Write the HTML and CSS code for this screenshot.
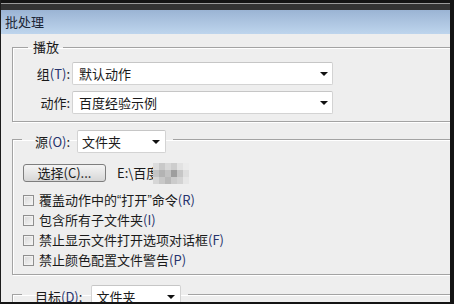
FILE: index.html
```html
<!DOCTYPE html>
<html lang="zh-CN">
<head>
  <meta charset="UTF-8" />
  <meta name="viewport" content="width=device-width, initial-scale=1.0" />
  <title>批处理</title>
  <link rel="stylesheet" href="styles.css">
</head>
<body>
  <div class="window">
    <div class="frame-top"></div>
    <div class="titlebar">批处理</div>

    <div class="dialog">
      <!-- 播放 -->
      <fieldset class="group group-play">
        <legend class="group-title">播放</legend>
        <div class="field-row">
          <span class="field-label">组<span class="key">(T)</span>:</span>
          <div class="combo combo-wide"><span>默认动作</span><i class="arrow"></i></div>
        </div>
        <div class="field-row">
          <span class="field-label">动作:</span>
          <div class="combo combo-wide"><span>百度经验示例</span><i class="arrow"></i></div>
        </div>
      </fieldset>

      <!-- 源 -->
      <fieldset class="group group-source">
        <legend class="group-title legend-combo">
          <span class="legend-label">源<span class="key">(O)</span>:</span>
          <div class="combo combo-source"><span>文件夹</span><i class="arrow"></i></div>
        </legend>
        <div class="choose-row">
          <button class="btn">选择(C)...</button>
          <span class="path">E:\百度</span>
          <svg class="mosaic" width="36" height="21" viewBox="0 0 36 21">
            <rect x="0" y="0" width="6" height="7" fill="#dcdcdc"/>
            <rect x="6" y="0" width="6" height="7" fill="#c9c9c9"/>
            <rect x="12" y="0" width="6" height="7" fill="#d8d8d8"/>
            <rect x="18" y="0" width="6" height="7" fill="#cdcdcd"/>
            <rect x="24" y="0" width="6" height="7" fill="#e2e2e2"/>
            <rect x="30" y="0" width="6" height="7" fill="#ebebeb"/>
            <rect x="0" y="7" width="6" height="7" fill="#c4c4c4"/>
            <rect x="6" y="7" width="6" height="7" fill="#b3b3b3"/>
            <rect x="12" y="7" width="6" height="7" fill="#c2c2c2"/>
            <rect x="18" y="7" width="6" height="7" fill="#9e9e9e"/>
            <rect x="24" y="7" width="6" height="7" fill="#c6c6c6"/>
            <rect x="30" y="7" width="6" height="7" fill="#dedede"/>
            <rect x="0" y="14" width="6" height="7" fill="#d6d6d6"/>
            <rect x="6" y="14" width="6" height="7" fill="#c7c7c7"/>
            <rect x="12" y="14" width="6" height="7" fill="#b9b9b9"/>
            <rect x="18" y="14" width="6" height="7" fill="#cbcbcb"/>
            <rect x="24" y="14" width="6" height="7" fill="#d3d3d3"/>
            <rect x="30" y="14" width="6" height="7" fill="#e6e6e6"/>
          </svg>
        </div>
        <ul class="checks">
          <li><span class="check"></span>覆盖动作中的<span class="quote">“</span>打开<span class="quote">”</span>命令<span class="key">(R)</span></li>
          <li><span class="check"></span>包含所有子文件夹<span class="key">(I)</span></li>
          <li><span class="check"></span>禁止显示文件打开选项对话框<span class="key">(F)</span></li>
          <li><span class="check"></span>禁止颜色配置文件警告<span class="key">(P)</span></li>
        </ul>
      </fieldset>

      <!-- 目标 -->
      <fieldset class="group group-target">
        <legend class="group-title legend-combo">
          <span class="legend-label">目标<span class="key">(D)</span>:</span>
          <div class="combo combo-target"><span>文件夹</span><i class="arrow"></i></div>
        </legend>
      </fieldset>
    </div>
  </div>
</body>
</html>
```

FILE: styles.css
```css
html, body {
  margin: 0;
  padding: 0;
}
body {
  width: 454px;
  height: 304px;
  overflow: hidden;
  background: #151515;
  font-family: "Noto Sans CJK SC", "Liberation Sans", sans-serif;
  font-size: 13px;
  color: #1a1a1a;
}
.window {
  box-sizing: border-box;
  width: 454px;
  height: 304px;
  display: flex;
  flex-direction: column;
  border-left: 1px solid #1c1c1c;
  border-right: 4px solid #141414;
  border-bottom: 2px solid #141414;
  background: #eeeeee;
  overflow: hidden;
}
.frame-top {
  height: 10px;
  flex: none;
  background: linear-gradient(#141414 0 3px, #9a9a9a 3px 4px, #333333 4px);
}
.titlebar {
  height: 24px;
  flex: none;
  line-height: 24px;
  padding-left: 4px;
  background: linear-gradient(#9bb4d4, #bed5ed);
  color: #1b2636;
}
.dialog {
  flex: 1;
  overflow: hidden;
  padding-left: 11px;
}

/* group boxes */
.group {
  margin: 0 -20px 0 0;
  padding: 0;
  border: 1px solid #a3a3a3;
  box-shadow: inset 1px 1px 0 #fff, 1px 1px 0 #fff;
}
.group-title {
  padding: 0 4px 0 5px;
  line-height: 16px;
}
.group-play {
  margin-top: 5px;
  padding: 7px 0 7px 0;
}
.group-play .group-title {
  margin-left: 15px;
}
.legend-combo {
  display: flex;
  align-items: center;
  padding: 4px 7px 0 13px;
  margin-left: 9px;
}
.legend-label {
  margin-right: 7px;
  line-height: 16px;
}
.group-target .legend-label {
  margin-right: 9px;
}
.group-source {
  margin-top: 4px;
  padding: 11px 0 4px 0;
}
.group-target {
  margin-top: 6px;
  padding: 0;
  height: 40px;
}
.key {
  color: #27336c;
}
.quote {
  font-family: "Liberation Sans", sans-serif;
}

/* rows */
.field-row {
  display: flex;
  align-items: center;
  margin-bottom: 6px;
}
.field-row:last-child {
  margin-bottom: 0;
}
.field-label {
  width: 57px;
  text-align: right;
  margin-right: 2px;
  line-height: 16px;
}

/* combo boxes */
.combo {
  box-sizing: border-box;
  height: 23px;
  display: flex;
  align-items: center;
  justify-content: space-between;
  background: #fff;
  border: 1px solid #d3d3d3;
  border-top-color: #c6c6c6;
  border-radius: 2px;
  line-height: 16px;
}
.combo-wide {
  width: 261px;
  padding: 0 4px 0 6px;
}
.combo-source {
  width: 89px;
  padding: 0 5px 0 4px;
}
.combo-target {
  width: 90px;
  padding: 0 5px 0 4px;
}
.arrow {
  width: 0;
  height: 0;
  border-left: 4px solid transparent;
  border-right: 4px solid transparent;
  border-top: 4px solid #111;
}

/* chooser */
.choose-row {
  display: flex;
  align-items: center;
  height: 18px;
  margin: 0 0 8px 10px;
}
.btn {
  box-sizing: border-box;
  width: 83px;
  height: 18px;
  padding: 0;
  font: inherit;
  line-height: 14px;
  color: #1a1a1a;
  border: 1px solid #7e7e7e;
  border-radius: 3px;
  background: linear-gradient(#f4f4f4, #e6e6e6 50%, #d6d6d6);
}
.path {
  margin-left: 11px;
  line-height: 16px;
}
.mosaic {
  display: block;
  margin-left: -6px;
}

/* checkboxes */
.checks {
  list-style: none;
  margin: 0 0 0 10px;
  padding: 0;
}
.checks li {
  display: flex;
  align-items: center;
  height: 20px;
  line-height: 16px;
}
.check {
  box-sizing: border-box;
  width: 11px;
  height: 11px;
  margin-right: 5px;
  border: 1px solid #8f8f8f;
  background: linear-gradient(135deg, #d8d8d8, #f6f6f6);
  box-shadow: inset 0 0 0 1px #f2f2f2;
}
```
